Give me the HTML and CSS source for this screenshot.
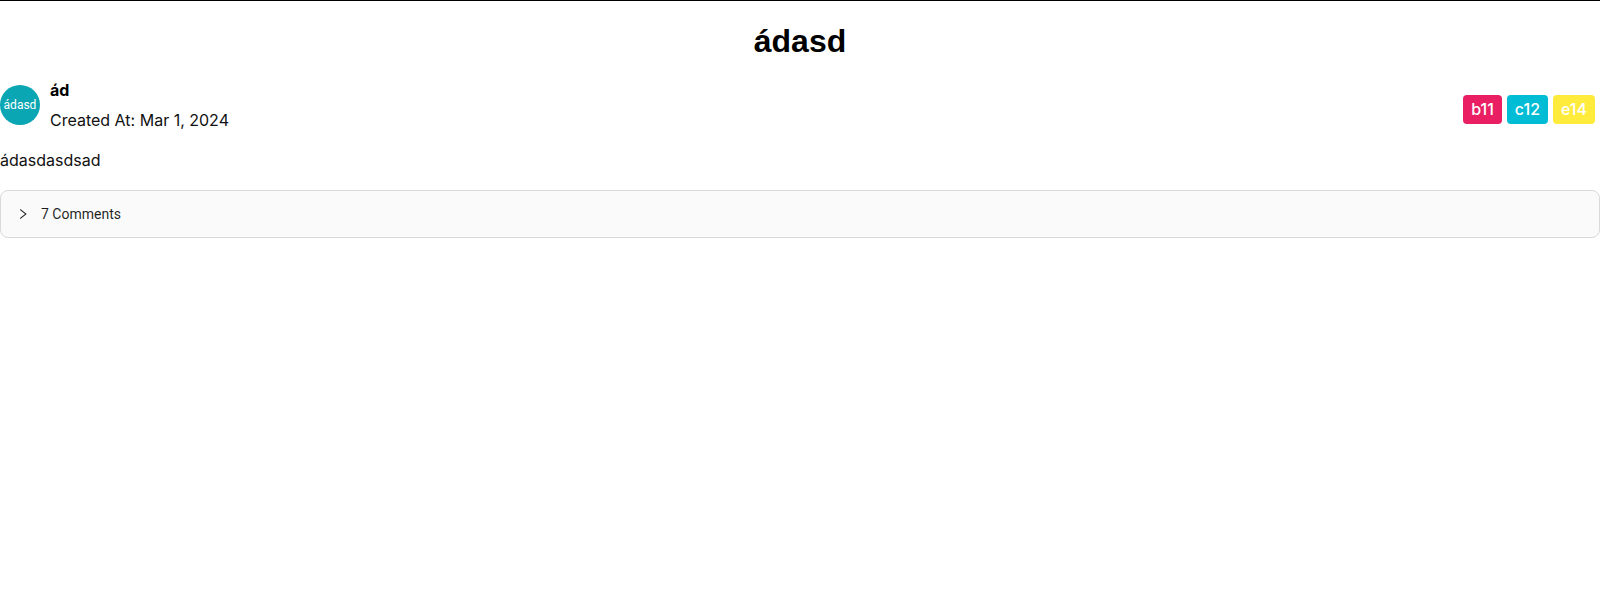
FILE: index.html
```html
<!DOCTYPE html>
<html lang="en">
<head>
<meta charset="utf-8">
<title>ádasd</title>
<link rel="stylesheet" href="styles.css">
</head>
<body>
<div class="page">
  <h1 class="title">ádasd</h1>
  <div class="post-header">
    <div class="author">
      <div class="avatar"><span class="avatar-text">ádasd</span></div>
      <div class="meta">
        <div class="author-name">ád</div>
        <div class="created">Created At: Mar 1, 2024</div>
      </div>
    </div>
    <div class="tags">
      <span class="tag tag-pink">b11</span>
      <span class="tag tag-cyan">c12</span>
      <span class="tag tag-yellow">e14</span>
    </div>
  </div>
  <p class="content">ádasdasdsad</p>
  <div class="collapse">
    <div class="collapse-header">
      <svg class="arrow" viewBox="64 64 896 896" width="12" height="12" aria-hidden="true"><path fill="currentColor" d="M765.7 486.8L314.9 134.7A7.97 7.97 0 00302 141v77.3c0 4.9 2.3 9.6 6.1 12.6l360 281.1-360 281.1c-3.9 3-6.1 7.7-6.1 12.6V883c0 6.7 7.7 10.4 12.9 6.3l450.8-352.1a31.96 31.96 0 000-50.4z"/></svg>
      <span class="collapse-title">7 Comments</span>
    </div>
  </div>
</div>
</body>
</html>
```

FILE: styles.css
```css
html, body {
  margin: 0;
  padding: 0;
  background: #fff;
}
body {
  font-family: Inter, "Noto Sans", sans-serif;
  font-size: 16px;
  color: #000;
}
.page {
  border-top: 1px solid #000;
}
.title {
  font-family: "Liberation Sans", Arial, sans-serif;
  font-size: 32px;
  font-weight: 700;
  line-height: 37px;
  text-align: center;
  margin: 22px 0 0;
}
.post-header {
  display: flex;
  justify-content: space-between;
  align-items: center;
  margin-top: 18px;
}
.author {
  display: flex;
  align-items: center;
  gap: 10px;
}
.avatar {
  width: 40px;
  height: 40px;
  border-radius: 50%;
  background: #0aa6b3;
  display: flex;
  align-items: center;
  justify-content: center;
  flex-shrink: 0;
}
.avatar-text {
  color: #fff;
  font-family: Roboto, "Noto Sans", sans-serif;
  font-size: 12px;
  line-height: 1;
}
.meta {
  display: flex;
  flex-direction: column;
  gap: 6px;
}
.author-name {
  font-weight: 700;
  line-height: 24px;
}
.created {
  line-height: 24px;
  color: #111;
}
.tags {
  display: flex;
  gap: 5px;
  margin-right: 5px;
  margin-top: 8px;
}
.tag {
  color: #fff;
  font-size: 16px;
  font-weight: 500;
  line-height: 29px;
  padding: 0 8px;
  border-radius: 4px;
}
.tag-pink { background: #e91e63; }
.tag-cyan { background: #00bcd4; }
.tag-yellow { background: #ffeb3b; }
.content {
  margin: 16px 0 0;
  line-height: 24px;
  color: #111;
}
.collapse {
  margin-top: 18px;
  border: 1px solid #d9d9d9;
  border-radius: 8px;
  background: #fafafa;
}
.collapse-header {
  display: flex;
  align-items: center;
  padding: 12px 16px;
  font-family: Roboto, "Noto Sans", sans-serif;
  font-size: 14px;
  line-height: 22px;
  color: rgba(0, 0, 0, 0.88);
}
.arrow {
  margin-right: 12px;
  flex-shrink: 0;
}
```
